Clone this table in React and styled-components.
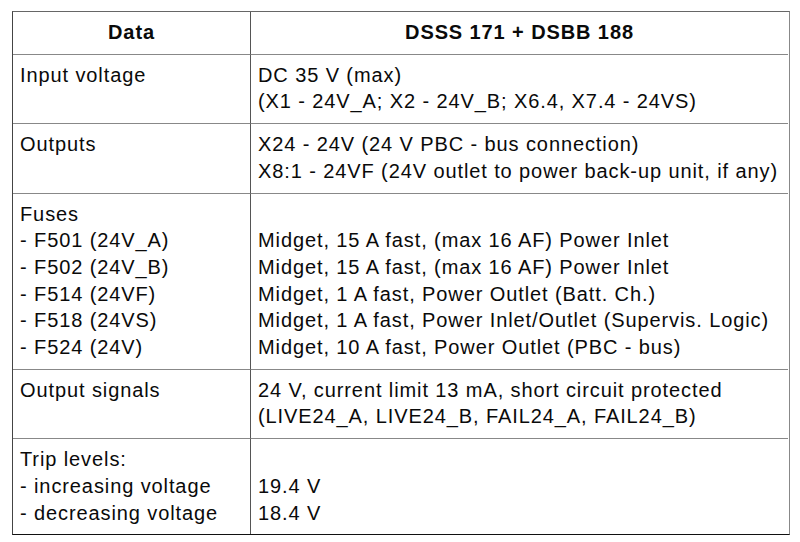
import styled, { createGlobalStyle } from "styled-components"

const GlobalStyle = createGlobalStyle`
    body {
        margin: 0;
        background: #ffffff;
    }
`;

const Page = styled.div`
    padding: 11px 0 0 12px;
    width: 800px;
    height: 542px;
    box-sizing: border-box;
`;

const Table = styled.div`
    display: grid;
    grid-template-columns: 237px 538px;
    width: 776px;
    border-top: 1px solid #666;
    border-left: 1px solid #444;
    border-right: 1px solid #888;
    border-bottom: 1px solid #111;
    font-family: "Liberation Sans", Arial, sans-serif;
    font-size: 20px;
    letter-spacing: 0.9px;
    color: #0a0a0a;
`;

const Cell = styled.div`
    padding: ${(p) => (p.$head ? "7px 8px 8px" : "7px 7px 8px")};
    line-height: 26.7px;
    white-space: pre;
    font-weight: ${(p) => (p.$head ? 700 : 400)};
    text-align: ${(p) => (p.$head ? "center" : "left")};
    border-bottom: ${(p) => (p.$last ? "none" : "1px solid #888")};
    border-left: ${(p) => (p.$right ? "1px solid #555" : "none")};
`;

const rows = [
    ["Input voltage", "DC 35 V (max)\n(X1 - 24V_A; X2 - 24V_B; X6.4, X7.4 - 24VS)"],
    ["Outputs", "X24 - 24V (24 V PBC - bus connection)\nX8:1 - 24VF (24V outlet to power back-up unit, if any)"],
    [
        "Fuses\n- F501 (24V_A)\n- F502 (24V_B)\n- F514 (24VF)\n- F518 (24VS)\n- F524 (24V)",
        " \nMidget, 15 A fast, (max 16 AF) Power Inlet\nMidget, 15 A fast, (max 16 AF) Power Inlet\nMidget, 1 A fast, Power Outlet (Batt. Ch.)\nMidget, 1 A fast, Power Inlet/Outlet (Supervis. Logic)\nMidget, 10 A fast, Power Outlet (PBC - bus)",
    ],
    ["Output signals", "24 V, current limit 13 mA, short circuit protected\n(LIVE24_A, LIVE24_B, FAIL24_A, FAIL24_B)"],
    ["Trip levels:\n- increasing voltage\n- decreasing voltage", " \n19.4 V\n18.4 V"],
];

const App = () => {
    return (
        <Page>
            <GlobalStyle />
            <Table>
                <Cell $head>Data</Cell>
                <Cell $head $right>DSSS 171 + DSBB 188</Cell>
                {rows.map(([label, value], i) => {
                    const last = i === rows.length - 1;
                    return [
                        <Cell key={`l${i}`} $last={last}>{label}</Cell>,
                        <Cell key={`r${i}`} $right $last={last}>{value}</Cell>,
                    ];
                })}
            </Table>
        </Page>
    )
}

export default App;
